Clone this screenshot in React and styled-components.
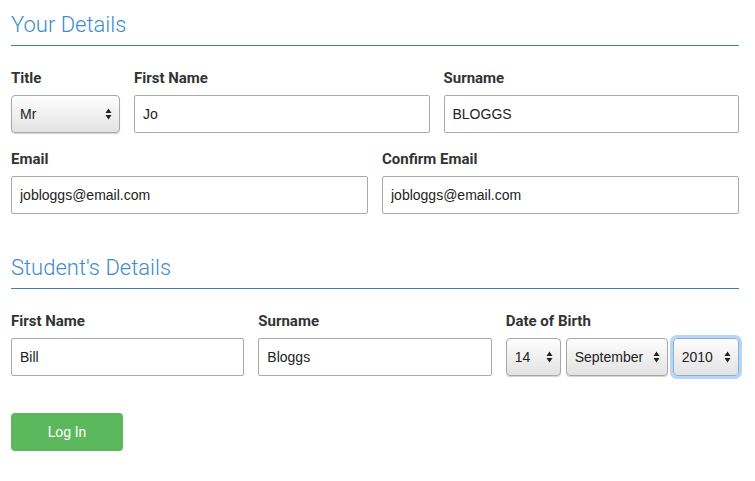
import React from "react";
import styled, { createGlobalStyle, css } from "styled-components";

// Estilos globales
const GlobalStyle = createGlobalStyle`
  * { box-sizing: border-box; }
  body {
    margin: 0;
    background: #fff;
    font-family: Roboto, "Liberation Sans", sans-serif;
    color: #333;
  }
`;

const Page = styled.div`
  width: 755px;
  padding: 11px 16px 0 11px;
`;

const SectionTitle = styled.h3`
  margin: ${props => props.$first ? "0" : "40px"} 0 0;
  padding-bottom: 6px;
  font-size: 22px;
  line-height: 28px;
  font-weight: 300;
  color: #428bca;
  border-bottom: 1px solid #3a7fc0;
`;

const Row = styled.div`
  display: grid;
  grid-template-columns: ${props => props.$cols};
  column-gap: 14px;
  margin-top: ${props => props.$top || "16px"};
`;

const Field = styled.div`
  display: flex;
  flex-direction: column;
  min-width: 0;
`;

const Label = styled.label`
  display: block;
  margin-bottom: 7px;
  font-size: 15px;
  line-height: 20px;
  font-weight: 700;
  color: #333;
`;

const controlText = css`
  font-family: "Liberation Sans", Arial, sans-serif;
  font-size: 14px;
  color: #222;
`;

const Input = styled.input`
  ${controlText}
  width: 100%;
  height: 38px;
  padding: 0 8px;
  border: 1px solid #aaa;
  border-radius: 2px;
  background: #fff;
  outline: none;
`;

const SelectWrap = styled.div`
  position: relative;
  width: ${props => props.$w || "100%"};
  flex: none;
`;

const Select = styled.select`
  ${controlText}
  appearance: none;
  -webkit-appearance: none;
  width: 100%;
  height: 38px;
  padding: 0 20px 0 8px;
  border: 1px solid ${props => props.$focus ? "#86afdd" : "#a8a8a8"};
  border-radius: 4px;
  background: linear-gradient(to bottom, #fdfdfd 0%, #f1f1f1 45%, #e3e3e3 100%);
  box-shadow: ${props => props.$focus
    ? "0 0 0 3px rgba(128, 178, 236, 0.55)"
    : "0 1px 1px rgba(0, 0, 0, 0.18)"};
  outline: none;
`;

const Arrows = styled.svg`
  position: absolute;
  right: 8px;
  top: 13px;
  pointer-events: none;
`;

const DateRow = styled.div`
  display: flex;
  gap: 5px;
`;

const Button = styled.button`
  margin-top: 37px;
  width: 112px;
  height: 38px;
  border: none;
  border-radius: 4px;
  background: #5cb85c;
  color: #fff;
  font-family: Roboto, "Liberation Sans", sans-serif;
  font-size: 14px;
`;

function Dropdown({ value, options, width, focus }) {
  return (
    <SelectWrap $w={width}>
      <Select defaultValue={value} $focus={focus}>
        {options.map(o => <option key={o}>{o}</option>)}
      </Select>
      <Arrows width="7" height="12" viewBox="0 0 7 12">
        <path d="M0.5 5 L3.5 0.5 L6.5 5 Z M0.5 7 L3.5 11.5 L6.5 7 Z" fill="#222" />
      </Arrows>
    </SelectWrap>
  );
}

function App() {
  return (
    <>
      <GlobalStyle />
      <Page>
        <SectionTitle $first>Your Details</SectionTitle>

        <Row $cols="109px 1fr 1fr" $top="22px">
          <Field>
            <Label>Title</Label>
            <Dropdown value="Mr" options={["Mr", "Mrs", "Miss", "Ms", "Dr"]} />
          </Field>
          <Field>
            <Label>First Name</Label>
            <Input defaultValue="Jo" />
          </Field>
          <Field>
            <Label>Surname</Label>
            <Input defaultValue="BLOGGS" />
          </Field>
        </Row>

        <Row $cols="1fr 1fr">
          <Field>
            <Label>Email</Label>
            <Input defaultValue="jobloggs@email.com" />
          </Field>
          <Field>
            <Label>Confirm Email</Label>
            <Input defaultValue="jobloggs@email.com" />
          </Field>
        </Row>

        <SectionTitle>Student's Details</SectionTitle>

        <Row $cols="1fr 1fr 1fr" $top="22px">
          <Field>
            <Label>First Name</Label>
            <Input defaultValue="Bill" />
          </Field>
          <Field>
            <Label>Surname</Label>
            <Input defaultValue="Bloggs" />
          </Field>
          <Field>
            <Label>Date of Birth</Label>
            <DateRow>
              <Dropdown value="14" width="55px" options={["12", "13", "14", "15"]} />
              <Dropdown value="September" width="102px" options={["August", "September", "October"]} />
              <Dropdown value="2010" width="66px" focus options={["2009", "2010", "2011"]} />
            </DateRow>
          </Field>
        </Row>

        <Button>Log In</Button>
      </Page>
    </>
  );
}

export default App;
